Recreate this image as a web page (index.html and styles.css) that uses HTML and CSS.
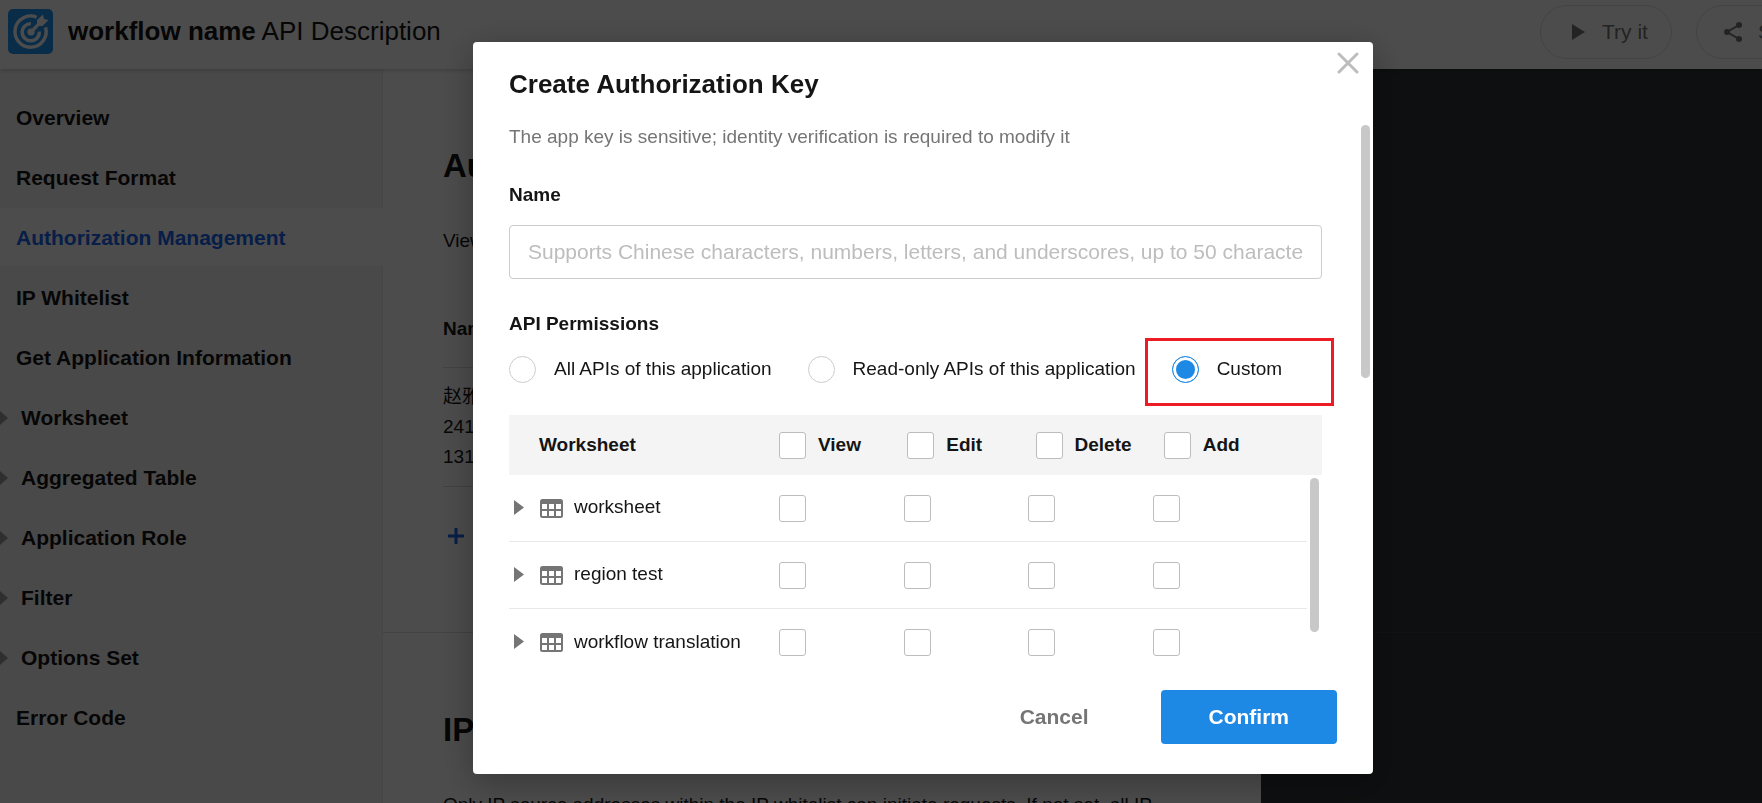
FILE: index.html
```html
<!DOCTYPE html>
<html lang="en">
<head>
<meta charset="utf-8">
<title>workflow name API Description</title>
<link rel="stylesheet" href="styles.css">
</head>
<body>
<div class="page">
  <header class="topbar">
    <svg class="logo" viewBox="0 0 45 45" aria-hidden="true">
      <rect width="45" height="45" rx="5" fill="#2196f3"/>
      <g fill="none" stroke="#fff" stroke-width="3.4">
        <path d="M28.6 8.2A15.6 15.6 0 1 0 37.6 18.4"/>
        <path d="M22.9 14.6A8.6 8.6 0 1 0 31.4 22.6"/>
      </g>
      <circle cx="23" cy="23" r="3.6" fill="#fff"/>
      <path d="M22 21.6L29 14.600V11L35 5.500L36 10L40.500 11L34.500 17H31L24.600 24z" fill="#fff"/>
    </svg>
    <h1 class="topbar-title"><strong>workflow name</strong> API Description</h1>
    <div class="topbar-actions">
      <button class="pill" type="button">
        <svg width="18" height="18" viewBox="0 0 18 18" aria-hidden="true"><path d="M4 1L17 9L4 17z"/></svg>
        Try it
      </button>
      <button class="pill" type="button">
        <svg width="18" height="20" viewBox="0 0 18 20" aria-hidden="true"><path d="M15 3L3 10L15 17" fill="none" stroke="#757575" stroke-width="2"/><circle cx="15" cy="3" r="3"/><circle cx="3" cy="10" r="3"/><circle cx="15" cy="17" r="3"/></svg>
        Share
      </button>
    </div>
  </header>
  <div class="layout">
    <nav class="sidebar">
      <a class="nav-item" href="#overview">Overview</a>
      <a class="nav-item" href="#format">Request Format</a>
      <a class="nav-item active" href="#authorization">Authorization Management</a>
      <a class="nav-item" href="#ip">IP Whitelist</a>
      <a class="nav-item" href="#info">Get Application Information</a>
      <a class="nav-item group" href="#worksheet">Worksheet</a>
      <a class="nav-item group" href="#aggregated">Aggregated Table</a>
      <a class="nav-item group" href="#role">Application Role</a>
      <a class="nav-item group" href="#filter">Filter</a>
      <a class="nav-item group" href="#options">Options Set</a>
      <a class="nav-item" href="#errors">Error Code</a>
    </nav>
    <main class="docs">
      <section class="doc-section" id="authorization">
        <div class="doc-content">
          <h2>Authorization Management</h2>
          <p>View and manage authorization keys</p>
          <table class="keys">
            <thead><tr><th>Name</th></tr></thead>
            <tbody><tr><td>赵雅<br>241<br>131</td></tr></tbody>
          </table>
          <button class="add-key" type="button" aria-label="Add key">
            <svg width="18" height="18" viewBox="0 0 18 18" aria-hidden="true"><path d="M9 1V17M1 9H17" stroke="#1565f0" stroke-width="3"/></svg>
          </button>
        </div>
        <div class="doc-code"></div>
      </section>
      <section class="doc-section" id="ip">
        <div class="doc-content">
          <h2>IP Whitelist</h2>
          <p>Only IP source addresses within the IP whitelist can initiate requests. If not set, all IP</p>
        </div>
        <div class="doc-code"></div>
      </section>
    </main>
  </div>
</div>

<div class="overlay">
  <form class="modal" role="dialog" aria-labelledby="modal-title">
    <button class="close" type="button" aria-label="Close">
      <svg width="22" height="22" viewBox="0 0 22 22" aria-hidden="true"><path d="M2 2L20 20M20 2L2 20" stroke="#bdbdbd" stroke-width="3" stroke-linecap="round"/></svg>
    </button>
    <div class="scroll-thumb modal-thumb"></div>
    <h2 class="modal-title" id="modal-title">Create Authorization Key</h2>
    <div class="modal-body">
      <p class="hint">The app key is sensitive; identity verification is required to modify it</p>
      <label class="field-label" for="key-name">Name</label>
      <input class="text-input" id="key-name" type="text" placeholder="Supports Chinese characters, numbers, letters, and underscores, up to 50 characters">
      <fieldset class="permissions">
        <legend>API Permissions</legend>
        <div class="radios">
          <label class="radio"><input type="radio" name="scope">All APIs of this application</label>
          <label class="radio"><input type="radio" name="scope">Read-only APIs of this application</label>
          <label class="radio highlighted"><input type="radio" name="scope" checked>Custom</label>
        </div>
      </fieldset>
      <table class="grid">
        <thead>
          <tr>
            <th class="name-head" scope="col">Worksheet</th>
            <th scope="col"><label><input type="checkbox">View</label></th>
            <th scope="col"><label><input type="checkbox">Edit</label></th>
            <th scope="col"><label><input type="checkbox">Delete</label></th>
            <th scope="col"><label><input type="checkbox">Add</label></th>
          </tr>
        </thead>
        <tbody>
          <tr>
            <td class="name-cell"><svg class="caret" viewBox="0 0 10 15"><path d="M0 0L10 7.500L0 15z"/></svg><svg class="sheet" viewBox="0 0 23 19"><path fill-rule="evenodd" d="M2.500 0H20.500A2.500 2.500 0 0 1 23 2.500V16.500A2.500 2.500 0 0 1 20.500 19H2.500A2.500 2.500 0 0 1 0 16.500V2.500A2.500 2.500 0 0 1 2.500 0ZM2 5V10H7V5ZM9 5V10H14V5ZM16 5V10H21V5ZM2 12V17H7V12ZM9 12V17H14V12ZM16 12V17H21V12Z"/></svg>worksheet</td>
            <td><input type="checkbox" aria-label="View worksheet"></td>
            <td><input type="checkbox" aria-label="Edit worksheet"></td>
            <td><input type="checkbox" aria-label="Delete worksheet"></td>
            <td><input type="checkbox" aria-label="Add worksheet"></td>
          </tr>
          <tr>
            <td class="name-cell"><svg class="caret" viewBox="0 0 10 15"><path d="M0 0L10 7.500L0 15z"/></svg><svg class="sheet" viewBox="0 0 23 19"><path fill-rule="evenodd" d="M2.500 0H20.500A2.500 2.500 0 0 1 23 2.500V16.500A2.500 2.500 0 0 1 20.500 19H2.500A2.500 2.500 0 0 1 0 16.500V2.500A2.500 2.500 0 0 1 2.500 0ZM2 5V10H7V5ZM9 5V10H14V5ZM16 5V10H21V5ZM2 12V17H7V12ZM9 12V17H14V12ZM16 12V17H21V12Z"/></svg>region test</td>
            <td><input type="checkbox" aria-label="View region test"></td>
            <td><input type="checkbox" aria-label="Edit region test"></td>
            <td><input type="checkbox" aria-label="Delete region test"></td>
            <td><input type="checkbox" aria-label="Add region test"></td>
          </tr>
          <tr>
            <td class="name-cell"><svg class="caret" viewBox="0 0 10 15"><path d="M0 0L10 7.500L0 15z"/></svg><svg class="sheet" viewBox="0 0 23 19"><path fill-rule="evenodd" d="M2.500 0H20.500A2.500 2.500 0 0 1 23 2.500V16.500A2.500 2.500 0 0 1 20.500 19H2.500A2.500 2.500 0 0 1 0 16.500V2.500A2.500 2.500 0 0 1 2.500 0ZM2 5V10H7V5ZM9 5V10H14V5ZM16 5V10H21V5ZM2 12V17H7V12ZM9 12V17H14V12ZM16 12V17H21V12Z"/></svg>workflow translation</td>
            <td><input type="checkbox" aria-label="View workflow translation"></td>
            <td><input type="checkbox" aria-label="Edit workflow translation"></td>
            <td><input type="checkbox" aria-label="Delete workflow translation"></td>
            <td><input type="checkbox" aria-label="Add workflow translation"></td>
          </tr>
        </tbody>
      </table>
    </div>
    <footer class="modal-footer">
      <button class="btn btn-text" type="button">Cancel</button>
      <button class="btn btn-primary" type="button">Confirm</button>
    </footer>
  </form>
</div>
</body>
</html>
```
FILE: styles.css
```css
* {
  box-sizing: border-box;
}

body,
h1,
h2,
p,
fieldset,
legend {
  margin: 0;
  padding: 0;
  border: 0;
}

body {
  height: 100vh;
  overflow: hidden;
  font: 19px/30px "Liberation Sans", "Noto Sans CJK SC", sans-serif;
  color: #151515;
  background: #fff;
}

button,
input {
  font: inherit;
  margin: 0;
}

button {
  padding: 0;
  border: 0;
  background: none;
}

table {
  border-spacing: 0;
}

th,
td {
  padding: 0;
  text-align: left;
}

/* Page */
.page {
  display: flex;
  flex-direction: column;
  height: 100%;
  overflow: hidden;
}

.topbar {
  position: relative;
  z-index: 1;
  flex: none;
  display: flex;
  align-items: flex-start;
  padding: 5px 0 10px 8px;
  background: #fff;
  box-shadow: 0 2px 4px rgba(0, 0, 0, 0.16);
}

.logo {
  width: 45px;
  height: 45px;
  margin-top: 4px;
}

.topbar-title {
  margin-left: 15px;
  font-size: 26px;
  font-weight: 400;
  line-height: 52px;
}

.topbar-actions {
  display: flex;
  gap: 24px;
  margin-left: auto;
  margin-right: -76px;
}

.pill {
  display: flex;
  align-items: center;
  gap: 16px;
  height: 54px;
  padding: 0 23px 0 27px;
  border: 1px solid #e0e0e0;
  border-radius: 27px;
  font-size: 21px;
  color: #757575;
}

.pill svg {
  fill: #757575;
}

.layout {
  flex: 1;
  display: flex;
  min-height: 0;
}

.sidebar {
  flex: none;
  display: flex;
  flex-direction: column;
  gap: 2px;
  width: 383px;
  padding-top: 19px;
  background: #f5f5f5;
  box-shadow: inset -1px 0 #eaeaea;
}

.nav-item {
  display: flex;
  align-items: center;
  gap: 13px;
  height: 58px;
  padding: 2px 16px 0;
  font-size: 21px;
  font-weight: 700;
  color: #151515;
  text-decoration: none;
}

.nav-item.active {
  background: #fff;
  color: #1565f0;
}

.nav-item.group {
  padding-left: 0;
}

.nav-item.group::before {
  content: "";
  border: solid transparent;
  border-width: 7px 0 7px 8px;
  border-left-color: #9e9e9e;
}

.docs {
  flex: 1;
  min-width: 0;
}

.doc-section {
  display: grid;
  grid-template-columns: 878fr 501fr;
  border-bottom: 1px solid #ddd;
}

.doc-content {
  min-width: 0;
  padding: 78px 60px 87px;
}

.doc-content h2 {
  margin-bottom: 41px;
  font-size: 33px;
  line-height: 38px;
}

.doc-code {
  margin-bottom: -1px;
  background: #2f3437;
  border-bottom: 1px solid #3b4043;
}

.keys {
  width: 100%;
  margin: 58px 0 40px;
}

.keys th {
  padding-bottom: 23px;
  border-bottom: 1px solid #ddd;
}

.keys td {
  padding: 14px 0;
  border-bottom: 1px solid #ddd;
}

.add-key {
  display: flex;
  padding-left: 4px;
}

/* Dialog */
.overlay {
  position: fixed;
  inset: 0;
  z-index: 2;
  display: flex;
  justify-content: center;
  align-items: flex-start;
  padding: 42px 0 30px 84px;
  background: rgba(0, 0, 0, 0.7);
}

.modal {
  position: relative;
  width: 900px;
  padding: 24px 36px 30px;
  border-radius: 4px;
  background: #fff;
  box-shadow: 0 8px 36px rgba(0, 0, 0, 0.3);
}

.close {
  position: absolute;
  top: 10px;
  right: 14px;
  display: flex;
}

.scroll-thumb {
  position: absolute;
  right: 3px;
  width: 9px;
  border-radius: 5px;
  background: #c8c8c8;
}

.modal-thumb {
  top: 83px;
  height: 253px;
}

.modal-title {
  font-size: 26px;
  line-height: 36px;
}

.modal-body {
  padding-right: 15px;
}

.hint {
  padding-top: 20px;
  color: #757575;
}

.field-label {
  display: block;
  margin-top: 28px;
  font-weight: 700;
}

.permissions {
  margin-top: 30px;
}

.permissions legend {
  font-weight: 700;
}

.text-input {
  width: 100%;
  height: 54px;
  margin-top: 15px;
  padding: 0 18px;
  border: 1px solid #ccc;
  border-radius: 4px;
  font-size: 21px;
}

.text-input::placeholder {
  color: #bdbdbd;
}

.radios {
  display: flex;
  gap: 36px;
  margin-top: 15px;
  white-space: nowrap;
}

.radio {
  display: flex;
  align-items: center;
  gap: 18px;
}

.radio input {
  appearance: none;
  flex: none;
  width: 27px;
  height: 27px;
  border: 1px solid #ccc;
  border-radius: 50%;
}

.radio input:checked {
  border-color: #1e88e5;
  background: #1e88e5;
  box-shadow: inset 0 0 0 3px #fff;
}

.highlighted {
  position: relative;
}

.highlighted::after {
  content: "";
  position: absolute;
  inset: -16px -52px -22px -27px;
  border: 3px solid #ed1c24;
}

.grid {
  display: block;
  position: relative;
  margin-top: 31px;
}

.grid thead,
.grid tbody {
  display: block;
}

.grid tr {
  display: grid;
  grid-template-columns: 270px repeat(4, 1fr);
  align-items: center;
  padding-right: 30px;
}

.grid thead tr {
  height: 60px;
  background: #f4f4f4;
}

.grid tbody {
  padding-right: 15px;
}

.grid tbody::after {
  content: "";
  position: absolute;
  top: 63px;
  right: 3px;
  width: 9px;
  height: 154px;
  border-radius: 5px;
  background: #c8c8c8;
}

.grid tbody tr {
  height: 67px;
  border-bottom: 1px solid #e8e8e8;
}

.grid tbody tr:last-child {
  border-bottom: 0;
}

.name-head {
  padding-left: 30px;
}

.grid label {
  display: flex;
  align-items: center;
  gap: 12px;
}

.grid input {
  appearance: none;
  display: block;
  width: 27px;
  height: 27px;
  border: 1px solid #bdbdbd;
  border-radius: 3px;
  background: #fff;
}

.name-cell {
  display: flex;
  align-items: center;
  padding: 0 0 2px 5px;
  white-space: nowrap;
}

.caret {
  width: 10px;
  height: 15px;
  margin-right: 16px;
  fill: #757575;
}

.sheet {
  width: 23px;
  height: 19px;
  margin: 2px 11px 0 0;
  fill: #757575;
}

.modal-footer {
  display: flex;
  justify-content: flex-end;
  gap: 36px;
  margin-top: 14px;
}

.btn {
  height: 54px;
  padding: 0 36px;
  border-radius: 4px;
  font-size: 21px;
  font-weight: 700;
}

.btn-text {
  color: #757575;
}

.btn-primary {
  padding: 0 48px;
  background: #1e88e5;
  color: #fff;
}
```
